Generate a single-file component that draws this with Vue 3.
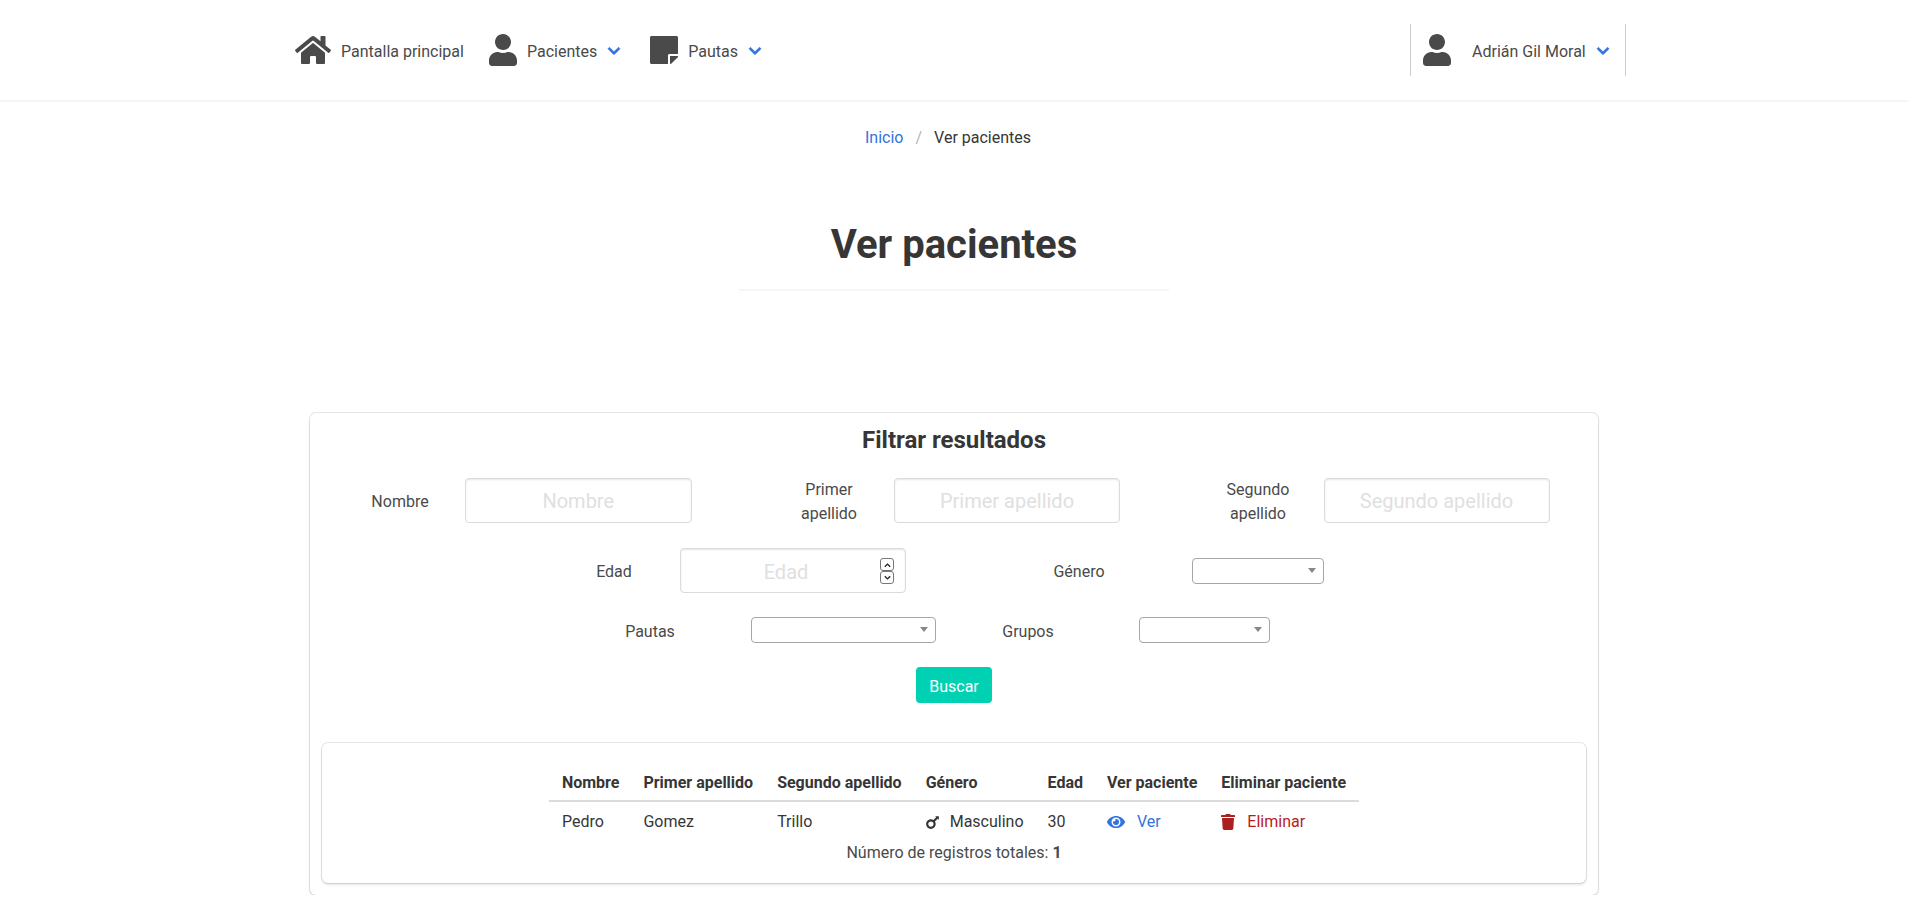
<script setup>
const rows = [
  { nombre: 'Pedro', primer: 'Gomez', segundo: 'Trillo', genero: 'Masculino', edad: 30 }
]
</script>

<template>
  <div class="page">
    <nav class="navbar">
      <div class="nav-inner">
        <div class="nav-start">
          <a class="nav-item item-home">
            <svg class="icon-home" viewBox="0 0 576 512"><path d="M280.37 148.26 96 300.11V464a16 16 0 0 0 16 16l112.06-.29a16 16 0 0 0 15.92-16V368a16 16 0 0 1 16-16h64a16 16 0 0 1 16 16v95.64a16 16 0 0 0 16 16.05L464 480a16 16 0 0 0 16-16V300L295.67 148.26a12.19 12.19 0 0 0-15.3 0zM571.6 251.47 488 182.56V44.05a12 12 0 0 0-12-12h-56a12 12 0 0 0-12 12v72.61L318.47 43a48 48 0 0 0-61 0L4.34 251.47a12 12 0 0 0-1.6 16.9l25.5 31A12 12 0 0 0 45.15 301l235.22-193.74a12.19 12.19 0 0 1 15.3 0L530.9 301a12 12 0 0 0 16.9-1.6l25.5-31a12 12 0 0 0-1.7-16.93z"/></svg>
            <span>Pantalla principal</span>
          </a>
          <a class="nav-item item-pacientes">
            <svg class="icon-user" viewBox="0 0 448 512"><path d="M224 256c70.7 0 128-57.3 128-128S294.7 0 224 0 96 57.3 96 128s57.3 128 128 128zm89.6 32h-16.7c-22.2 10.2-46.9 16-72.9 16s-50.6-5.8-72.9-16h-16.7C60.2 288 0 348.2 0 422.4V464c0 26.5 21.5 48 48 48h352c26.5 0 48-21.5 48-48v-41.6c0-74.2-60.2-134.4-134.4-134.4z"/></svg>
            <span>Pacientes</span>
            <svg class="chevron" viewBox="0 0 448 512"><path d="M207.029 381.476 12.686 187.132c-9.373-9.373-9.373-24.569 0-33.941l22.667-22.667c9.357-9.357 24.522-9.375 33.901-.04L224 284.505l154.745-154.021c9.379-9.335 24.544-9.317 33.901.04l22.667 22.667c9.373 9.373 9.373 24.569 0 33.941L240.971 381.476c-9.373 9.372-24.569 9.372-33.942 0z"/></svg>
          </a>
          <a class="nav-item">
            <svg class="icon-note" viewBox="0 32 448 448"><path d="M312 320h136V56c0-13.3-10.7-24-24-24H24C10.7 32 0 42.7 0 56v400c0 13.3 10.7 24 24 24h264V344c0-13.2 10.8-24 24-24zm129 55-98 98c-4.5 4.5-10.6 7-17 7h-6V352h128v6.1c0 6.3-2.5 12.4-7 16.9z"/></svg>
            <span>Pautas</span>
            <svg class="chevron" viewBox="0 0 448 512"><path d="M207.029 381.476 12.686 187.132c-9.373-9.373-9.373-24.569 0-33.941l22.667-22.667c9.357-9.357 24.522-9.375 33.901-.04L224 284.505l154.745-154.021c9.379-9.335 24.544-9.317 33.901.04l22.667 22.667c9.373 9.373 9.373 24.569 0 33.941L240.971 381.476c-9.373 9.372-24.569 9.372-33.942 0z"/></svg>
          </a>
        </div>
        <div class="nav-user">
          <svg class="icon-user" viewBox="0 0 448 512"><path d="M224 256c70.7 0 128-57.3 128-128S294.7 0 224 0 96 57.3 96 128s57.3 128 128 128zm89.6 32h-16.7c-22.2 10.2-46.9 16-72.9 16s-50.6-5.8-72.9-16h-16.7C60.2 288 0 348.2 0 422.4V464c0 26.5 21.5 48 48 48h352c26.5 0 48-21.5 48-48v-41.6c0-74.2-60.2-134.4-134.4-134.4z"/></svg>
          <span class="user-name">Adrián Gil Moral</span>
          <svg class="chevron" viewBox="0 0 448 512"><path d="M207.029 381.476 12.686 187.132c-9.373-9.373-9.373-24.569 0-33.941l22.667-22.667c9.357-9.357 24.522-9.375 33.901-.04L224 284.505l154.745-154.021c9.379-9.335 24.544-9.317 33.901.04l22.667 22.667c9.373 9.373 9.373 24.569 0 33.941L240.971 381.476c-9.373 9.372-24.569 9.372-33.942 0z"/></svg>
        </div>
      </div>
    </nav>

    <main class="content">
      <ul class="breadcrumb">
        <li><a>Inicio</a></li>
        <li class="sep">/</li>
        <li>Ver pacientes</li>
      </ul>

      <h1 class="title">Ver pacientes</h1>
      <hr class="title-rule" />

      <section class="card">
        <h2 class="card-title">Filtrar resultados</h2>

        <div class="filter-row row-names">
          <label class="lbl lbl-nombre">Nombre</label>
          <input class="text-input input-nombre" placeholder="Nombre" />
          <label class="lbl lbl-primer">Primer<br />apellido</label>
          <input class="text-input" placeholder="Primer apellido" />
          <label class="lbl lbl-segundo">Segundo<br />apellido</label>
          <input class="text-input" placeholder="Segundo apellido" />
        </div>

        <div class="filter-row row-age">
          <label class="lbl lbl-edad">Edad</label>
          <div class="text-input number-input">
            <span class="edad-ph">Edad</span>
            <span class="spinner">
              <span class="spin"><svg viewBox="0 0 10 6"><path d="M2 5 5 2l3 3" /></svg></span>
              <span class="spin"><svg viewBox="0 0 10 6"><path d="M2 1l3 3 3-3" /></svg></span>
            </span>
          </div>
          <label class="lbl lbl-genero">Género</label>
          <div class="select sel-genero"></div>
        </div>

        <div class="filter-row row-select">
          <label class="lbl lbl-pautas">Pautas</label>
          <div class="select sel-pautas"></div>
          <label class="lbl lbl-grupos">Grupos</label>
          <div class="select sel-grupos"></div>
        </div>

        <div class="actions">
          <button class="btn-buscar">Buscar</button>
        </div>

        <div class="results">
          <table class="table">
            <thead>
              <tr>
                <th>Nombre</th>
                <th>Primer apellido</th>
                <th>Segundo apellido</th>
                <th>Género</th>
                <th>Edad</th>
                <th>Ver paciente</th>
                <th>Eliminar paciente</th>
              </tr>
            </thead>
            <tbody>
              <tr v-for="row in rows" :key="row.nombre">
                <td>{{ row.nombre }}</td>
                <td>{{ row.primer }}</td>
                <td>{{ row.segundo }}</td>
                <td>
                  <span class="cell-icon">
                    <svg class="icon-mars" viewBox="0 0 384 512"><path d="M372 64h-79c-10.7 0-16 12.9-8.5 20.5l16.9 16.9-80.7 80.7c-22.2-14-48.5-22.1-76.7-22.1C64.5 160 0 224.500 0 304s64.500 144 144 144 144-64.500 144-144c0-28.200-8.100-54.500-22.100-76.700l80.700-80.700 16.900 16.900c7.600 7.600 20.500 2.200 20.500-8.500V76c0-6.600-5.400-12-12-12zM144 384c-44.100 0-80-35.900-80-80s35.900-80 80-80 80 35.900 80 80-35.900 80-80 80z"/></svg>
                    {{ row.genero }}
                  </span>
                </td>
                <td>{{ row.edad }}</td>
                <td>
                  <a class="cell-icon link">
                    <svg class="icon-eye" viewBox="0 0 576 512"><path d="M572.52 241.4C518.29 135.59 410.93 64 288 64S57.68 135.64 3.48 241.41a32.35 32.35 0 0 0 0 29.19C57.71 376.41 165.07 448 288 448s230.32-71.64 284.52-177.41a32.35 32.35 0 0 0 0-29.19zM288 400a144 144 0 1 1 144-144 143.93 143.93 0 0 1-144 144zm0-240a95.31 95.31 0 0 0-25.31 3.79 47.85 47.85 0 0 1-66.9 66.9A95.78 95.78 0 1 0 288 160z"/></svg>
                    Ver
                  </a>
                </td>
                <td>
                  <a class="cell-icon danger">
                    <svg class="icon-trash" viewBox="0 0 448 512"><path d="M432 32H312l-9.4-18.7A24 24 0 0 0 281.1 0H166.800a23.720 23.720 0 0 0-21.400 13.300L136 32H16A16 16 0 0 0 0 48v32a16 16 0 0 0 16 16h416a16 16 0 0 0 16-16V48a16 16 0 0 0-16-16zM53.200 467a48 48 0 0 0 47.900 45h245.800a48 48 0 0 0 47.900-45L416 128H32z"/></svg>
                    Eliminar
                  </a>
                </td>
              </tr>
            </tbody>
          </table>
          <p class="total">Número de registros totales: <strong>1</strong></p>
        </div>
      </section>
    </main>
  </div>
</template>

<style>
html,
body {
  margin: 0;
  background: #fff;
  overflow: hidden;
}
</style>

<style scoped>
.page {
  width: 1908px;
  font-family: Roboto, 'Liberation Sans', sans-serif;
  font-size: 16px;
  line-height: 24px;
  color: #4a4a4a;
}

/* navbar */
.navbar {
  height: 100px;
  border-bottom: 2px solid #f5f5f5;
}
.nav-inner {
  width: 1344px;
  height: 100%;
  margin: 0 auto;
  display: flex;
  align-items: center;
  justify-content: space-between;
}
.nav-start {
  display: flex;
  align-items: center;
  padding-left: 13px;
}
.nav-item {
  display: flex;
  align-items: center;
  margin-right: 30px;
}
.item-home {
  margin-right: 25px;
}
.nav-item span {
  margin-left: 10px;
  padding-top: 3px;
}
.icon-home {
  width: 36px;
  height: 32px;
  fill: #4a4a4a;
}
.icon-user {
  width: 28px;
  height: 32px;
  fill: #4a4a4a;
}
.icon-note {
  width: 28px;
  height: 28px;
  fill: #4a4a4a;
}
.chevron {
  width: 12px;
  height: 14px;
  fill: #3273dc;
  stroke: #3273dc;
  stroke-width: 24;
  margin-left: 11px;
  margin-top: 2px;
  overflow: visible;
}
.nav-user {
  display: flex;
  align-items: center;
  height: 52px;
  width: 216px;
  box-sizing: border-box;
  padding-left: 12px;
  border-left: 1px solid #ccc;
  border-right: 1px solid #ccc;
}
.user-name {
  margin-left: 21px;
  padding-top: 3px;
}

/* heading */
.breadcrumb {
  list-style: none;
  margin: 0;
  padding: 24px 12px 0 0;
  display: flex;
  justify-content: center;
  color: #363636;
}
.breadcrumb a {
  color: #3273dc;
}
.sep {
  color: #b5b5b5;
  margin: 0 12px;
}
.title {
  margin: 70px 0 0;
  text-align: center;
  font-size: 40px;
  line-height: 50px;
  font-weight: 700;
  color: #363636;
}
.title-rule {
  width: 430px;
  height: 2px;
  border: none;
  background: #f5f5f5;
  margin: 19px auto 0;
}

/* filter card */
.card,
.results {
  border-radius: 6px;
  box-shadow: 0 2px 3px rgba(10, 10, 10, 0.1), 0 0 0 1px rgba(10, 10, 10, 0.1);
}
.card {
  width: 1288px;
  box-sizing: border-box;
  margin: 122px auto 0;
  padding: 0 12px 12px;
}
.card-title {
  margin: 0;
  padding-top: 12px;
  text-align: center;
  font-size: 24px;
  line-height: 30px;
  font-weight: 700;
  color: #363636;
}
.filter-row {
  display: flex;
  align-items: center;
}
.row-names {
  margin-top: 23px;
  height: 45px;
}
.row-age {
  margin-top: 25px;
  height: 45px;
}
.row-select {
  margin-top: 24px;
  height: 26px;
}
.lbl {
  text-align: center;
  width: 60px;
  margin-top: 2px;
}
.row-select .lbl {
  margin-top: 4px;
}
.lbl-nombre {
  margin-left: 48px;
  margin-right: 35px;
}
.lbl-primer,
.lbl-segundo {
  width: 100px;
}
.lbl-primer {
  margin-left: 87.5px;
  margin-right: 15px;
}
.lbl-segundo {
  margin-left: 88px;
  margin-right: 15.5px;
}
.text-input {
  width: 226px;
  height: 45px;
  box-sizing: border-box;
  padding: 0 16px;
  border: 1px solid #dbdbdb;
  border-radius: 4px;
  box-shadow: inset 0 1px 2px rgba(10, 10, 10, 0.1);
  font-family: inherit;
  font-size: 20px;
  text-align: center;
  color: #363636;
  outline: none;
}
.input-nombre {
  width: 226.5px;
}
.text-input::placeholder {
  color: #e0e0e0;
  opacity: 1;
}
.number-input {
  display: flex;
  align-items: center;
  justify-content: center;
  position: relative;
  color: #e0e0e0;
  padding-right: 30px;
}
.edad-ph {
  padding-top: 2px;
}
.lbl-edad {
  margin-left: 262px;
  margin-right: 36px;
}
.lbl-genero {
  margin-left: 143px;
  margin-right: 83px;
}
.spinner {
  position: absolute;
  right: 11px;
  top: 9px;
  display: flex;
  flex-direction: column;
}
.spin {
  width: 14px;
  height: 13px;
  box-sizing: border-box;
  border: 1px solid #767676;
  border-radius: 3px;
  display: flex;
  align-items: center;
  justify-content: center;
}
.spin svg {
  width: 9px;
  height: 6px;
  fill: none;
  stroke: #222;
  stroke-width: 1.5;
}
.select {
  height: 26px;
  box-sizing: border-box;
  border: 1px solid #a6a6a6;
  border-radius: 4px;
  position: relative;
}
.select::after {
  content: '';
  position: absolute;
  right: 7px;
  top: 9px;
  border-left: 4px solid transparent;
  border-right: 4px solid transparent;
  border-top: 5px solid #888;
}
.sel-genero {
  width: 132px;
}
.sel-pautas {
  width: 185px;
}
.sel-grupos {
  width: 131px;
}
.lbl-pautas {
  margin-left: 298px;
  margin-right: 71px;
}
.lbl-grupos {
  margin-left: 62px;
  margin-right: 81px;
}
.actions {
  display: flex;
  justify-content: center;
  margin-top: 24px;
}
.btn-buscar {
  width: 76px;
  height: 36px;
  border: none;
  border-radius: 4px;
  background: #00d1b2;
  color: #fff;
  font-family: inherit;
  font-size: 16px;
  padding: 2px 0 0;
}

/* results */
.results {
  margin-top: 40px;
  box-sizing: border-box;
  height: 140px;
  padding-top: 22px;
  display: flex;
  flex-direction: column;
  align-items: center;
}
.table {
  border-collapse: separate;
  border-spacing: 0;
  color: #363636;
}
.table th {
  text-align: left;
  font-weight: 700;
  padding: 6px 12px 5px;
  border-bottom: 2px solid #dbdbdb;
}
.table td {
  padding: 8px 12px;
}
.table tr > :first-child {
  padding-left: 13px;
}
.table tr > :last-child {
  padding-right: 13px;
}
.cell-icon {
  display: flex;
  align-items: center;
  gap: 12px;
}
.icon-mars {
  width: 13px;
  height: 17px;
  margin-right: -1px;
  fill: #363636;
}
.icon-eye {
  width: 18px;
  height: 16px;
  fill: #3273dc;
}
.icon-trash {
  width: 14px;
  height: 16px;
  fill: #ad1f1f;
}
.link {
  color: #3273dc;
}
.danger {
  color: #b91c1c;
}
.total {
  margin: -1px 0 0;
  color: #4a4a4a;
}
</style>
